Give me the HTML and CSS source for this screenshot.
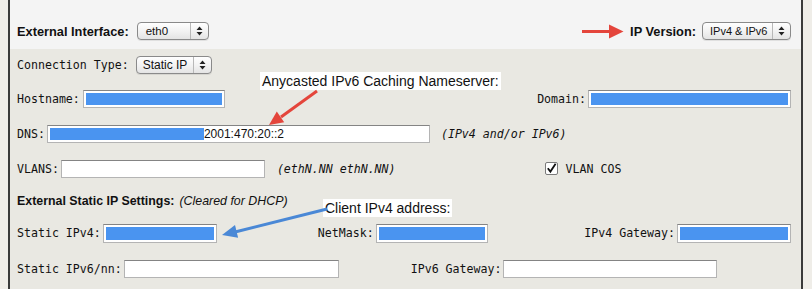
FILE: index.html
```html
<!DOCTYPE html>
<html>
<head>
<meta charset="utf-8">
<link rel="stylesheet" href="styles.css">
</head>
<body>
<div class="page">
  <div class="panel">
    <div class="top">
      <div class="grp">
        <span class="blabel lab-ei">External Interface:</span>
        <div class="select w-eth"><span class="sval">eth0</span><span class="spin"><svg width="7" height="10" viewBox="0 0 7 10"><path d="M3.5 0.5 L6.5 4 L0.5 4 Z M0.5 6 L6.5 6 L3.5 9.5 Z" fill="#222"/></svg></span></div>
      </div>
      <div class="grp">
        <span class="blabel lab-ipv">IP Version:</span>
        <div class="select w-ipv"><span class="sval">IPv4 &amp; IPv6</span><span class="spin"><svg width="7" height="10" viewBox="0 0 7 10"><path d="M3.5 0.5 L6.5 4 L0.5 4 Z M0.5 6 L6.5 6 L3.5 9.5 Z" fill="#222"/></svg></span></div>
      </div>
    </div>
    <div class="body">
      <div class="row r-conn">
        <span class="mlabel">Connection Type:</span>
        <div class="select w-static"><span class="sval">Static IP</span><span class="spin"><svg width="7" height="10" viewBox="0 0 7 10"><path d="M3.5 0.5 L6.5 4 L0.5 4 Z M0.5 6 L6.5 6 L3.5 9.5 Z" fill="#222"/></svg></span></div>
      </div>
      <div class="row r-host">
        <div class="pair g3"><span class="mlabel">Hostname:</span><div class="field w-host"><span class="sel"></span></div></div>
        <div class="pair push"><span class="mlabel">Domain:</span><div class="field w-domain"><span class="sel"></span></div></div>
      </div>
      <div class="row r-dns">
        <div class="pair"><span class="mlabel">DNS:</span><div class="field w-dns"><span class="sel sel-dns"></span><span class="ftext">2001:470:20::2</span></div></div>
        <span class="note n-dns">(IPv4 and/or IPv6)</span>
      </div>
      <div class="row r-vlan">
        <div class="pair"><span class="mlabel">VLANS:</span><div class="field w-vlan"></div></div>
        <span class="note n-vlan">(ethN.NN ethN.NN)</span>
        <span class="check"><svg width="13" height="13" viewBox="0 0 13 13"><rect x="0.5" y="0.5" width="12" height="12" rx="1.5" fill="#fff" stroke="#7a7a7a"/><path d="M2.8 6.2 L5.4 9.6 L10.6 1.8" fill="none" stroke="#111" stroke-width="1.8"/></svg></span>
        <span class="mlabel">VLAN COS</span>
      </div>
      <div class="row r-head">
        <span class="blabel hlabel">External Static IP Settings:</span>
        <span class="inote">(Cleared for DHCP)</span>
      </div>
      <div class="row r-s4">
        <div class="pair"><span class="mlabel">Static IPv4:</span><div class="field w-s4"><span class="sel"></span></div></div>
        <div class="pair m-mask"><span class="mlabel">NetMask:</span><div class="field w-mask"><span class="sel"></span></div></div>
        <div class="pair push"><span class="mlabel">IPv4 Gateway:</span><div class="field w-gw4"><span class="sel"></span></div></div>
      </div>
      <div class="row r-s6">
        <div class="pair"><span class="mlabel">Static IPv6/nn:</span><div class="field w-s6"></div></div>
        <div class="pair m-gw6"><span class="mlabel">IPv6 Gateway:</span><div class="field w-gw6"></div></div>
      </div>
    </div>
  </div>
  <div class="ann ann-dns">Anycasted IPv6 Caching Nameserver:</div>
  <div class="ann ann-client">Client IPv4 address:</div>
  <svg class="overlay" width="812" height="289" viewBox="0 0 812 289">
    <g fill="#e4453b" stroke="#e4453b">
      <line x1="582" y1="31.5" x2="611" y2="31.5" stroke-width="3"/>
      <polygon points="623.5,31.5 609,24.5 609,38.5" stroke="none"/>
      <line x1="317" y1="91" x2="281" y2="117" stroke-width="3"/>
      <polygon points="269,125 284.2,122.3 276.8,111.6" stroke="none"/>
    </g>
    <g fill="#4a88d6" stroke="#4a88d6">
      <line x1="327" y1="209" x2="235" y2="232" stroke-width="3"/>
      <polygon points="222,235 238.1,237.7 235,225" stroke="none"/>
    </g>
  </svg>
</div>
</body>
</html>
```
FILE: styles.css
```css
html, body {
  margin: 0;
  padding: 0;
  background: #efede8;
}
.page {
  position: relative;
  width: 812px;
  height: 289px;
  overflow: hidden;
  background: #efede8;
  font-family: "DejaVu Sans Mono", monospace;
  color: #111;
}
.panel {
  margin-left: 8px;
  width: 795px;
  height: 289px;
  box-sizing: border-box;
  border-left: 2px solid #3a3a3a;
  border-right: 2px solid #3a3a3a;
  background: #e9e8e2;
}
.top {
  height: 49px;
  box-sizing: border-box;
  padding: 15px 10px 0 7px;
  background: #f4f4f4;
  display: flex;
  justify-content: space-between;
  align-items: flex-start;
}
.grp {
  display: flex;
  align-items: center;
  height: 34px;
  margin-top: -1px;
}
.blabel {
  font-family: "Liberation Sans", Arial, sans-serif;
  font-weight: bold;
  font-size: 12.8px;
}
.hlabel { font-size: 12.4px; }
.lab-ei { margin-right: 8px; }
.lab-ipv { margin-right: 6px; }
.select {
  display: flex;
  align-items: center;
  box-sizing: border-box;
  height: 18px;
  border: 1px solid #8a8a8a;
  border-radius: 4px;
  background: linear-gradient(#ffffff, #f3f3f3 50%, #e4e4e4);
  font-family: "Liberation Sans", Arial, sans-serif;
  font-size: 11.5px;
  color: #111;
  box-shadow: 0 1px 0 rgba(0,0,0,0.08);
}
.sval { padding-left: 8px; white-space: nowrap; }
.spin {
  margin-left: auto;
  width: 17px;
  flex: none;
  height: 100%;
  border-left: 1px solid #b8b8b8;
  display: flex;
  align-items: center;
  justify-content: center;
}
.w-eth { width: 72px; }
.w-ipv { width: 89px; }
.w-ipv .sval { font-size: 11px; padding-left: 7px; }
.w-static { width: 76px; margin-left: 7px; }
.w-static .sval { padding-left: 6px; font-size: 12px; }

.body {
  padding: 0 10px 0 7px;
}
.row {
  display: flex;
  align-items: center;
}
.r-conn { height: 32px; }
.r-host { height: 35px; }
.r-dns { height: 35px; }
.r-vlan { height: 35px; }
.r-head { height: 29px; }
.r-s4 { height: 36px; }
.r-s6 { height: 35px; }

.mlabel {
  font-family: "DejaVu Sans Mono", monospace;
  font-size: 11.6px;
  white-space: pre;
}
.pair {
  display: flex;
  align-items: center;
  gap: 2px;
}
.pair.g3 { gap: 3px; }
.push { margin-left: auto; }
.m-mask { margin-left: 101px; }
.m-gw6 { margin-left: 72px; }

.field {
  box-sizing: border-box;
  height: 18px;
  border: 1px solid #b4b4b4;
  border-top-color: #848484;
  background: #fff;
  padding: 2px;
  display: flex;
  align-items: center;
}
.sel {
  flex: 1;
  align-self: stretch;
  background: #4a94f0;
}
.sel.sel-dns {
  flex: none;
  width: 154px;
}
.ftext {
  font-family: "Liberation Sans", Arial, sans-serif;
  font-size: 12px;
  color: #111;
}
.w-host { width: 142px; }
.w-domain { width: 203px; }
.w-dns { width: 383px; }
.w-vlan { width: 204px; }
.w-s4 { width: 114px; height: 19px; }
.w-mask { width: 112px; height: 19px; }
.w-gw4 { width: 114px; height: 19px; }
.w-s6 { width: 215px; }
.w-gw6 { width: 214px; }

.note {
  font-family: "DejaVu Sans Mono", monospace;
  font-style: italic;
  font-size: 11.6px;
  white-space: pre;
}
.n-dns { margin-left: 11px; }
.n-vlan { margin-left: 12px; }
.check {
  display: flex;
  margin-left: 149px;
  margin-right: 8px;
}
.inote {
  font-family: "Liberation Sans", Arial, sans-serif;
  font-style: italic;
  font-size: 12.4px;
  margin-left: 5px;
}

.ann {
  position: absolute;
  background: #fff;
  font-family: "Liberation Sans", Arial, sans-serif;
  font-size: 14px;
  line-height: 18px;
  padding: 0 2px;
  color: #111;
}
.ann-dns { left: 260px; top: 72px; }
.ann-client { left: 323px; top: 199px; }
.overlay {
  position: absolute;
  left: 0;
  top: 0;
  pointer-events: none;
}
```
